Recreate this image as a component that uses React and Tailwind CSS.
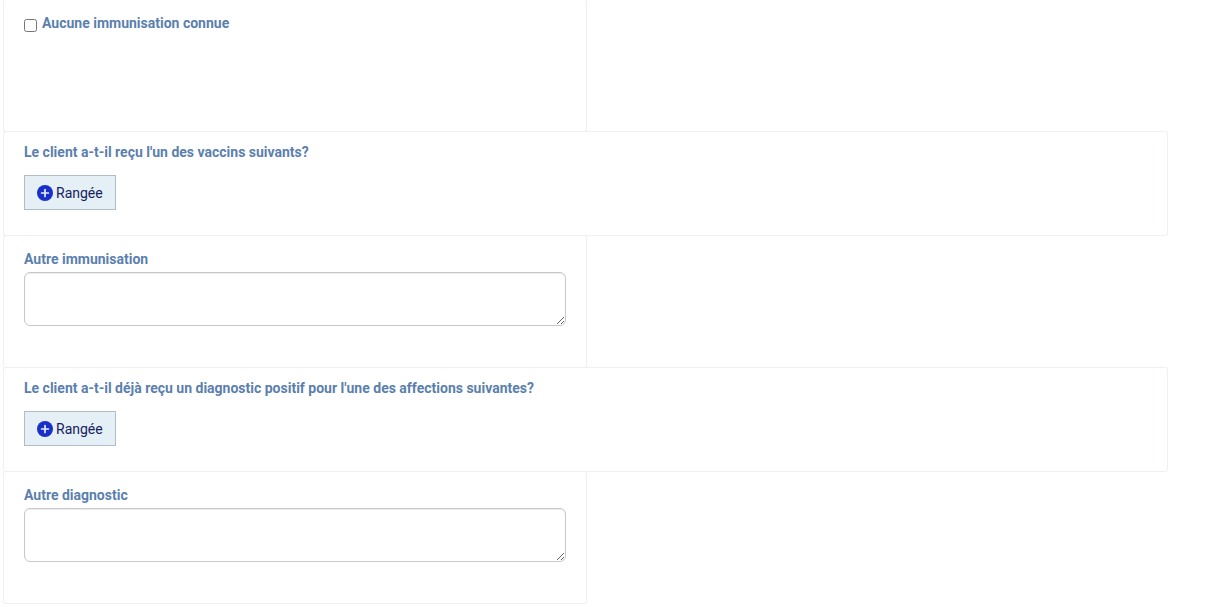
import React, { useState } from 'react';

const Panel = ({ half, className = '', children }) => (
  <section
    className={`rounded-xs px-5 shadow-[0_0_0_1px_#eef0f8] ${half ? 'w-1/2' : 'w-full'} ${className}`}
  >
    {children}
  </section>
);

const PlusIcon = () => (
  <svg viewBox="0 0 16 16" className="h-4 w-4 shrink-0" aria-hidden="true">
    <circle cx="8" cy="8" r="8" fill="#1a2fc9" />
    <path d="M8 4.6v6.8M4.6 8h6.8" stroke="#e4eff6" strokeWidth="1.7" strokeLinecap="round" />
  </svg>
);

const RowQuestion = ({ title, onAdd }) => (
  <Panel className="pt-[10px] pb-[25px]">
    <h2 className="text-sm font-bold text-[#5b7fae]">{title}</h2>
    <button
      type="button"
      onClick={onAdd}
      className="mt-[13px] flex h-[35px] cursor-pointer items-center gap-[3px] border border-[#b3bcc4] bg-[#e4eff6] px-3 text-sm text-[#16215e] hover:bg-[#d8e8f2]"
    >
      <PlusIcon />
      Rangée
    </button>
  </Panel>
);

const TextQuestion = ({ id, label, value, onChange }) => (
  <Panel half className="pt-[13px] pb-[41px]">
    <label htmlFor={id} className="block text-sm font-bold text-[#5b7fae]">
      {label}
    </label>
    <textarea
      id={id}
      value={value}
      onChange={(e) => onChange(e.target.value)}
      className="mt-[3px] block h-[54px] w-full resize rounded-md border border-[#c8c8c8] bg-white px-2 py-1 text-sm text-[#333333] shadow-[inset_0_1px_1px_rgba(0,0,0,0.08)]"
    />
  </Panel>
);

const App = () => {
  const [noneKnown, setNoneKnown] = useState(false);
  const [otherImmunisation, setOtherImmunisation] = useState('');
  const [otherDiagnosis, setOtherDiagnosis] = useState('');
  const [rows, setRows] = useState({ vaccines: 0, conditions: 0 });

  const addRow = (key) => setRows(prev => ({ ...prev, [key]: prev[key] + 1 }));

  return (
    <form className="flex flex-col gap-px pr-[39px] pb-1 pl-1 font-['Roboto',sans-serif]">
      <Panel half className="min-h-[131px] pt-[13px]">
        <div className="flex items-start gap-[5px]">
          <input
            id="none-known"
            type="checkbox"
            checked={noneKnown}
            onChange={(e) => setNoneKnown(e.target.checked)}
            className="mt-[6px] h-[13px] w-[13px]"
          />
          <label htmlFor="none-known" className="text-sm font-bold text-[#5b7fae]">
            Aucune immunisation connue
          </label>
        </div>
      </Panel>

      <RowQuestion
        title="Le client a-t-il reçu l'un des vaccins suivants?"
        onAdd={() => addRow('vaccines')}
      />

      <TextQuestion
        id="other-immunisation"
        label="Autre immunisation"
        value={otherImmunisation}
        onChange={setOtherImmunisation}
      />

      <RowQuestion
        title="Le client a-t-il déjà reçu un diagnostic positif pour l'une des affections suivantes?"
        onAdd={() => addRow('conditions')}
      />

      <TextQuestion
        id="other-diagnosis"
        label="Autre diagnostic"
        value={otherDiagnosis}
        onChange={setOtherDiagnosis}
      />
    </form>
  );
};

export default App;
